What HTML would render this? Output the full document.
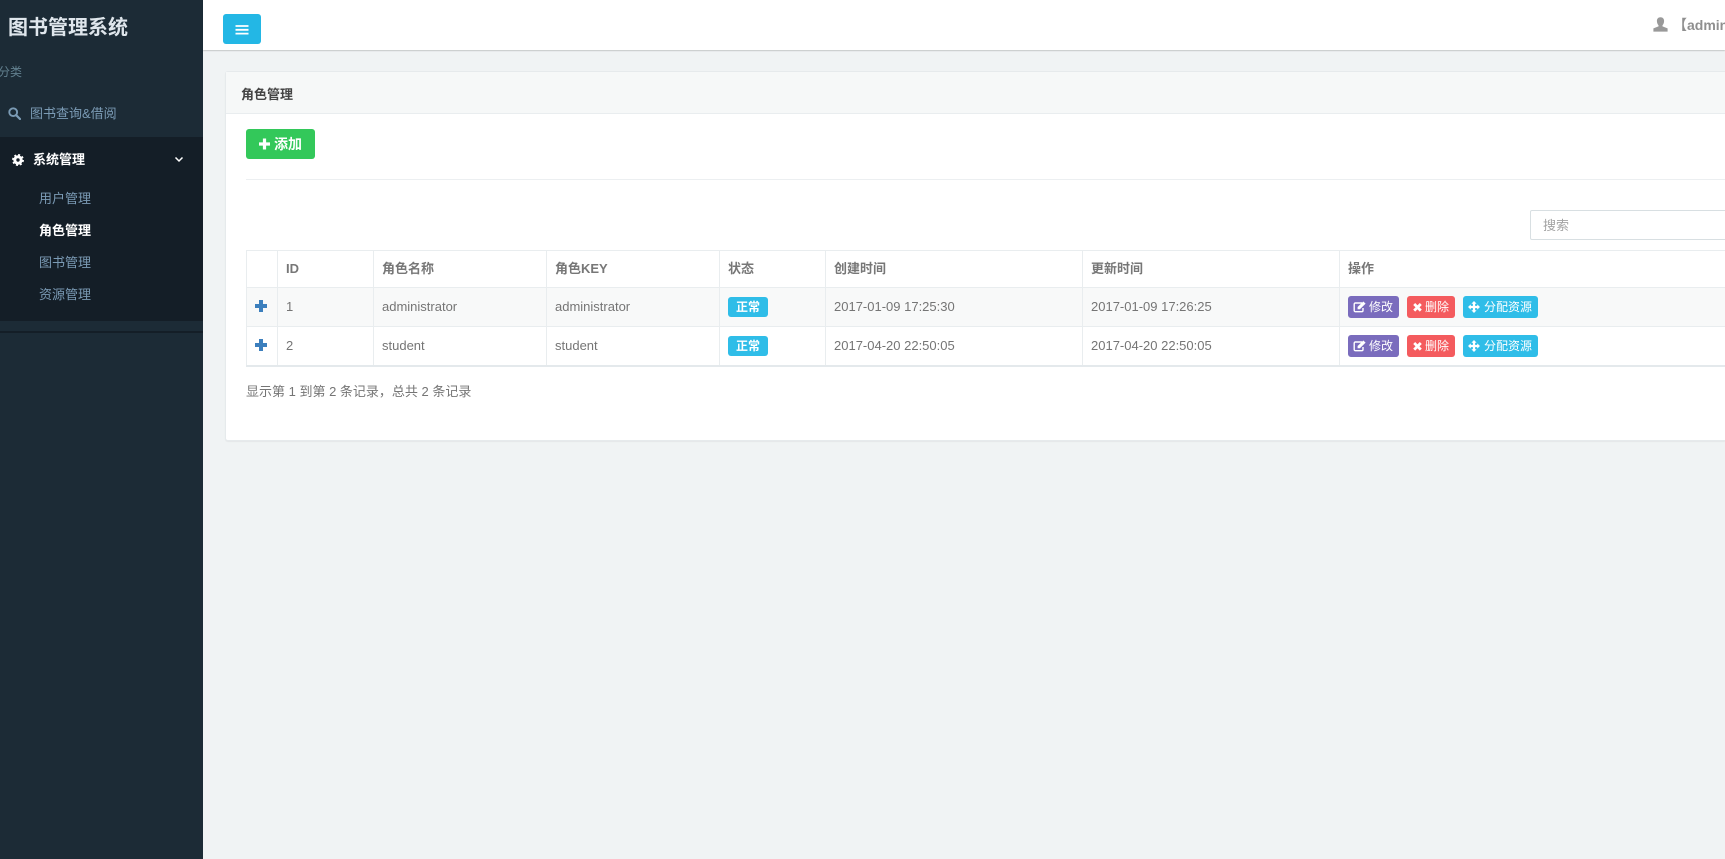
<!DOCTYPE html>
<html lang="zh-CN">
<head>
<meta charset="utf-8">
<title>角色管理</title>
<style>
html,body{margin:0;padding:0;width:1725px;height:859px;overflow:hidden;background:#f0f3f4}
body{position:relative;font-family:"Liberation Sans","Noto Sans CJK SC",sans-serif;font-size:13px;color:#757575}
div,svg,span{position:absolute;box-sizing:border-box}
.t{height:20px;line-height:20px;white-space:nowrap}
.b{font-weight:bold}
.side{left:0;top:0;width:203px;height:859px;background:#1c2b36}
.nav{color:#7b9bb5}
.th{color:#777;font-weight:bold}
.vl{width:1px;top:250px;height:115px;background:#e9edef}
.hl{left:246px;width:1479px;height:1px;background:#e9edef}
.btn{height:22px;border-radius:3px;color:#fff;font-size:12px;line-height:22px}
.btn span{top:0;white-space:nowrap}
.btn svg{top:5px}
.lab{left:728px;width:40px;height:20px;border-radius:3px;background:#2fbde8;color:#fff;font-size:12px;font-weight:bold;text-align:center;line-height:20px}
</style>
</head>
<body>

<div class="side"></div>
<div class="t b" style="left:8px;top:18px;font-size:20px;color:#dfe6ec">图书管理系统</div>
<div class="t" style="left:-2px;top:62px;font-size:12px;color:#62808f">分类</div>
<svg style="left:8px;top:107px" width="13" height="13" viewBox="0 0 13 13"><circle cx="5.2" cy="5.2" r="3.9" fill="none" stroke="#7b9bb5" stroke-width="1.9"/><path d="M8.2 8.2L12 12" stroke="#7b9bb5" stroke-width="2.2" stroke-linecap="round"/></svg>
<div class="t nav" style="left:30px;top:104px">图书查询&amp;借阅</div>

<div style="left:0;top:137px;width:203px;height:184px;background:#141e27"></div>
<div style="left:0;top:331px;width:203px;height:2px;background:#141e27"></div>
<svg style="left:12px;top:154px" width="12" height="12" viewBox="0 0 12 12"><circle cx="6" cy="6" r="3.2" fill="none" stroke="#fff" stroke-width="3"/><circle cx="6" cy="6" r="5.1" fill="none" stroke="#fff" stroke-width="1.7" stroke-dasharray="2 2.0"/></svg>
<div class="t b" style="left:33px;top:150px;color:#fff">系统管理</div>
<svg style="left:174px;top:156px" width="10" height="7" viewBox="0 0 10 7"><path d="M1.5 1.5L5 5L8.5 1.5" fill="none" stroke="#fff" stroke-width="1.5"/></svg>
<div class="t nav" style="left:39px;top:189px">用户管理</div>
<div class="t b" style="left:39px;top:221px;color:#fff">角色管理</div>
<div class="t nav" style="left:39px;top:253px">图书管理</div>
<div class="t nav" style="left:39px;top:285px">资源管理</div>

<div style="left:203px;top:0;width:1522px;height:50px;background:#fff;box-shadow:0 1px 1px rgba(0,0,0,.18)"></div>
<div style="left:223px;top:14px;width:38px;height:30px;border-radius:3px;background:#23b7e5"></div>
<svg style="left:235px;top:24px" width="14" height="11" viewBox="0 0 14 11"><path d="M0.5 2H13.5M0.5 5.8H13.5M0.5 9.6H13.5" stroke="#fff" stroke-width="1.8"/></svg>
<svg style="left:1653px;top:17px" width="15" height="15" viewBox="0 0 15 15"><path d="M7.5 0.2C5.1 0.2 3.9 1.8 3.9 4C3.9 6 4.8 7.5 5.5 8.3V9.4L0.4 11.4V14.6H14.6V11.4L9.5 9.4V8.3C10.2 7.5 11.1 6 11.1 4C11.1 1.8 9.9 0.2 7.5 0.2Z" fill="#999"/></svg>
<div class="t b" style="left:1673px;top:15px;color:#8f8f8f;font-size:14px">【admin</div>

<div style="left:225px;top:71px;width:1500px;height:370px;background:#fff;border:1px solid #e6eaec;border-right:0;border-radius:3px 0 0 3px;box-shadow:0 1px 1px rgba(0,0,0,.05)"></div>
<div style="left:226px;top:72px;width:1499px;height:42px;background:#f6f8f8;border-bottom:1px solid #e9edef"></div>
<div class="t b" style="left:241px;top:85px;color:#444">角色管理</div>

<div style="left:246px;top:129px;width:69px;height:30px;border-radius:3px;background:#33c85a"></div>
<svg style="left:258px;top:138px" width="13" height="12" viewBox="0 0 13 12"><path d="M6.5 0.5V11.5M1 6H12" stroke="#fff" stroke-width="3.2"/></svg>
<div class="t b" style="left:274px;top:134px;color:#fff;font-size:14px">添加</div>
<div style="left:246px;top:179px;width:1479px;height:1px;background:#eceff1"></div>

<div style="left:1530px;top:210px;width:200px;height:30px;border:1px solid #d8dfe2;border-radius:2px;background:#fff"></div>
<div class="t" style="left:1543px;top:216px;color:#a3a3a3">搜索</div>

<div style="left:246px;top:288px;width:1479px;height:38px;background:#f8f9f9"></div>
<div class="hl" style="top:250px"></div>
<div class="hl" style="top:287px"></div>
<div class="hl" style="top:326px"></div>
<div class="hl" style="top:365px;height:2px;background:#e4e9ec"></div>
<div class="vl" style="left:246px"></div>
<div class="vl" style="left:277px"></div>
<div class="vl" style="left:373px"></div>
<div class="vl" style="left:546px"></div>
<div class="vl" style="left:719px"></div>
<div class="vl" style="left:825px"></div>
<div class="vl" style="left:1082px"></div>
<div class="vl" style="left:1339px"></div>

<div class="t th" style="left:286px;top:259px">ID</div>
<div class="t th" style="left:382px;top:259px">角色名称</div>
<div class="t th" style="left:555px;top:259px">角色KEY</div>
<div class="t th" style="left:728px;top:259px">状态</div>
<div class="t th" style="left:834px;top:259px">创建时间</div>
<div class="t th" style="left:1091px;top:259px">更新时间</div>
<div class="t th" style="left:1348px;top:259px">操作</div>

<svg style="left:255px;top:300px" width="12" height="12" viewBox="0 0 12 12"><path d="M6 0V12M0 6H12" stroke="#3c7fbd" stroke-width="4"/></svg>
<svg style="left:255px;top:339px" width="12" height="12" viewBox="0 0 12 12"><path d="M6 0V12M0 6H12" stroke="#3c7fbd" stroke-width="4"/></svg>

<div class="t" style="left:286px;top:297px">1</div>
<div class="t" style="left:382px;top:297px">administrator</div>
<div class="t" style="left:555px;top:297px">administrator</div>
<div class="lab" style="top:297px">正常</div>
<div class="t" style="left:834px;top:297px">2017-01-09 17:25:30</div>
<div class="t" style="left:1091px;top:297px">2017-01-09 17:26:25</div>

<div class="t" style="left:286px;top:336px">2</div>
<div class="t" style="left:382px;top:336px">student</div>
<div class="t" style="left:555px;top:336px">student</div>
<div class="lab" style="top:336px">正常</div>
<div class="t" style="left:834px;top:336px">2017-04-20 22:50:05</div>
<div class="t" style="left:1091px;top:336px">2017-04-20 22:50:05</div>

<div class="btn" style="left:1348px;top:296px;width:51px;background:#7a6cbd">
<svg style="left:5px" width="13" height="12" viewBox="0 0 13 12"><path d="M9 2H2.5A1.2 1.2 0 0 0 1.2 3.2V9.5A1.2 1.2 0 0 0 2.5 10.7H8.8A1.2 1.2 0 0 0 10 9.5V7" fill="none" stroke="#fff" stroke-width="1.4"/><path d="M4.6 6L10.3 0.5L12.6 2.6L6.9 8.2H4.6Z" fill="#fff"/></svg>
<span style="left:21px">修改</span></div>
<div class="btn" style="left:1407px;top:296px;width:48px;background:#f45b5e">
<svg style="left:6px" width="9" height="12" viewBox="0 0 9 12"><path d="M1.2 3L7.8 9.6M7.8 3L1.2 9.6" stroke="#fff" stroke-width="2.8"/></svg>
<span style="left:18px">删除</span></div>
<div class="btn" style="left:1463px;top:296px;width:75px;background:#2fbde8">
<svg style="left:5px" width="12" height="12" viewBox="0 0 12 12"><path d="M6 1V11M1 6H11" stroke="#fff" stroke-width="2.2"/><path d="M6 0L8.6 2.8H3.4ZM6 12L8.6 9.2H3.4ZM0 6L2.8 3.4V8.6ZM12 6L9.2 3.4V8.6Z" fill="#fff"/></svg>
<span style="left:21px">分配资源</span></div>

<div class="btn" style="left:1348px;top:335px;width:51px;background:#7a6cbd">
<svg style="left:5px" width="13" height="12" viewBox="0 0 13 12"><path d="M9 2H2.5A1.2 1.2 0 0 0 1.2 3.2V9.5A1.2 1.2 0 0 0 2.5 10.7H8.8A1.2 1.2 0 0 0 10 9.5V7" fill="none" stroke="#fff" stroke-width="1.4"/><path d="M4.6 6L10.3 0.5L12.6 2.6L6.9 8.2H4.6Z" fill="#fff"/></svg>
<span style="left:21px">修改</span></div>
<div class="btn" style="left:1407px;top:335px;width:48px;background:#f45b5e">
<svg style="left:6px" width="9" height="12" viewBox="0 0 9 12"><path d="M1.2 3L7.8 9.6M7.8 3L1.2 9.6" stroke="#fff" stroke-width="2.8"/></svg>
<span style="left:18px">删除</span></div>
<div class="btn" style="left:1463px;top:335px;width:75px;background:#2fbde8">
<svg style="left:5px" width="12" height="12" viewBox="0 0 12 12"><path d="M6 1V11M1 6H11" stroke="#fff" stroke-width="2.2"/><path d="M6 0L8.6 2.8H3.4ZM6 12L8.6 9.2H3.4ZM0 6L2.8 3.4V8.6ZM12 6L9.2 3.4V8.6Z" fill="#fff"/></svg>
<span style="left:21px">分配资源</span></div>

<div class="t" style="left:246px;top:382px">显示第 1 到第 2 条记录，总共 2 条记录</div>

</body>
</html>
